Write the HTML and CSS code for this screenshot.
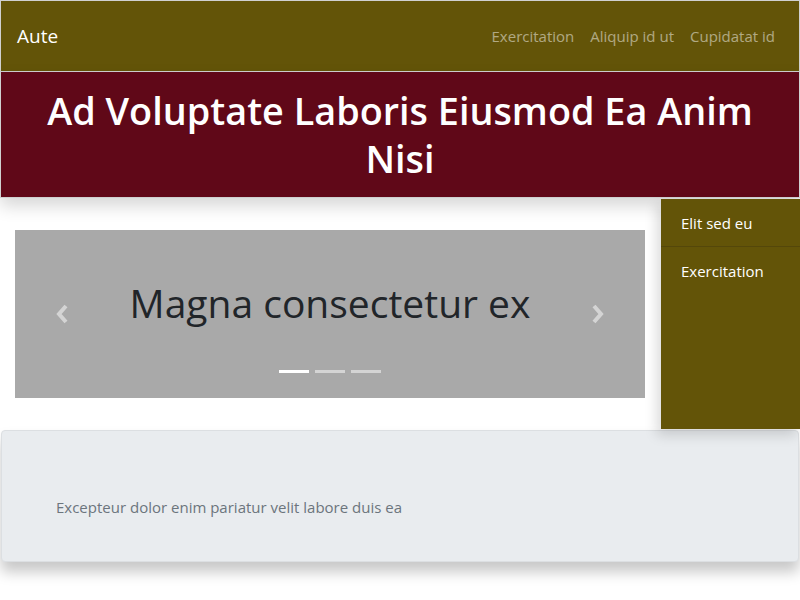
FILE: index.html
```html
<!DOCTYPE html>
<html>
<head>
<meta charset="utf-8">
<link rel="stylesheet" href="styles.css">
</head>
<body>
<div class="page">
<nav class="navbar">
  <a class="brand">Aute</a>
  <ul class="nav-links">
    <li>Exercitation</li>
    <li>Aliquip id ut</li>
    <li>Cupidatat id</li>
  </ul>
</nav>
<header class="hero">
  <h1>Ad Voluptate Laboris Eiusmod Ea Anim Nisi</h1>
</header>
<div class="main">
  <div class="content">
    <div class="carousel">
      <span class="arrow prev"><svg width="16" height="20" viewBox="0 0 16 20"><path d="M11 2 L4 10 L11 18" fill="none" stroke="currentColor" stroke-width="4"/></svg></span>
      <h2>Magna consectetur ex</h2>
      <span class="arrow next"><svg width="16" height="20" viewBox="0 0 16 20"><path d="M5 2 L12 10 L5 18" fill="none" stroke="currentColor" stroke-width="4"/></svg></span>
      <ol class="indicators">
        <li class="active"></li>
        <li></li>
        <li></li>
      </ol>
    </div>
  </div>
  <aside class="sidebar">
    <div class="side-item">Elit sed eu</div>
    <div class="side-item">Exercitation</div>
  </aside>
</div>
<footer class="footer">
  <p>Excepteur dolor enim pariatur velit labore duis ea</p>
</footer>
</div>
</body>
</html>
```

FILE: styles.css
```css
* { box-sizing: border-box; }
html, body { background: #fff; }
body {
  margin: 0;
  font-family: "Open Sans", "Noto Sans", sans-serif;
  color: #212529;
}
.page {
  padding-bottom: 38px;
}
.navbar {
  height: 72px;
  background: #635408;
  border: 1px solid #d0d0d0;
  display: flex;
  align-items: center;
  justify-content: space-between;
  padding: 0 16px;
}
.brand {
  color: #fff;
  font-size: 19px;
}
.nav-links {
  list-style: none;
  margin: 0;
  padding: 0;
  display: flex;
}
.nav-links li {
  color: rgba(255,255,255,0.5);
  font-size: 15px;
  padding: 0 8px;
}
.hero {
  background: #600818;
  border: 1px solid #d0d0d0;
  border-top: none;
  height: 126px;
  display: flex;
  align-items: center;
  justify-content: center;
  box-shadow: 0 8px 16px rgba(0,0,0,0.16);
  position: relative;
  z-index: 1;
}
.hero h1 {
  margin: 0;
  color: #fff;
  font-size: 37.8px;
  font-weight: 600;
  line-height: 48px;
  text-align: center;
  padding: 0 30px;
}
.main {
  display: flex;
  margin-top: 1px;
}
.content {
  flex: 1;
  padding: 31px 16px 31px 15px;
}
.carousel {
  background: #a9a9a9;
  height: 168px;
  display: flex;
  align-items: center;
  justify-content: space-between;
  padding: 0 40px 24px;
  position: relative;
}
.carousel h2 {
  margin: 0;
  font-size: 39px;
  font-weight: 500;
  color: #212529;
}
.arrow {
  color: rgba(255,255,255,0.5);
  display: flex;
  margin-top: 24px;
}
.indicators {
  position: absolute;
  left: 0;
  right: 0;
  bottom: 25px;
  margin: 0;
  padding: 0;
  list-style: none;
  display: flex;
  justify-content: center;
  gap: 6px;
}
.indicators li {
  width: 30px;
  height: 3px;
  background: rgba(255,255,255,0.5);
}
.indicators li.active { background: #fff; }
.sidebar {
  width: 139px;
  background: #635408;
  box-shadow: -4px 6px 12px rgba(0,0,0,0.15);
  position: relative;
  z-index: 2;
}
.side-item {
  color: #fff;
  font-size: 15px;
  padding: 14px 20px 11px;
  height: 48px;
  border-bottom: 1px solid #54470a;
}
.side-item:last-child { border-bottom: none; }
.footer {
  position: relative;
  margin: 1px 1px 0;
  height: 132px;
  background: #e9ecef;
  border: 1px solid #dcdfe2;
  border-radius: 4px;
  box-shadow: 0 10px 14px rgba(0,0,0,0.22);
  display: flex;
  align-items: center;
  padding: 22px 54px 0;
}
.footer p {
  margin: 0;
  color: #6c757d;
  font-size: 15px;
}
```
